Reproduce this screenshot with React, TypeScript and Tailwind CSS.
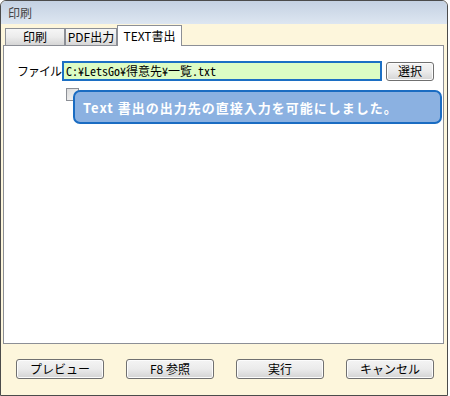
const ui = "font-['Noto_Sans_CJK_JP','Noto_Sans',sans-serif]";
const mono = "font-['Noto_Sans_Mono_CJK_JP','Noto_Sans_CJK_JP',monospace]";

function Tab({ label, width, active }: { label: string; width: string; active?: boolean }) {
  if (active) {
    return (
      <div
        className={`${width} relative -mb-px flex h-[21px] items-center justify-center border border-b-0 border-[#8c8f96] bg-white text-[12px] leading-none text-black`}
      >
        {label}
      </div>
    );
  }
  return (
    <div
      className={`${width} flex h-[17px] items-center justify-center border border-b-0 border-[#8c8f96] bg-gradient-to-b from-[#f6f6f6] via-[#ececec] to-[#d6d6d6] text-[12px] leading-none text-black`}
    >
      {label}
    </div>
  );
}

function Button({ label, className = "" }: { label: string; className?: string }) {
  return (
    <button
      className={`${className} flex items-center justify-center rounded-[3px] border border-[#707070] bg-gradient-to-b from-[#f4f4f4] via-[#ebebeb] to-[#d4d4d4] text-[12px] leading-none text-black shadow-[inset_0_0_0_1px_#fcfcfc]`}
    >
      {label}
    </button>
  );
}

export default function App() {
  return (
    <div className={`h-[396px] w-[450px] bg-white ${ui}`}>
      <div className="flex h-[396px] w-[448px] flex-col overflow-hidden rounded-t-[6px] border border-[#4b4b4b] bg-[#fdf6dc]">
        {/* title bar */}
        <div className="flex h-[23px] items-center bg-gradient-to-b from-[#c4d1e2] to-[#dde6f1] px-[7px] text-[12px] leading-none text-[#454545]">
          印刷
        </div>

        {/* tabs */}
        <div className="relative z-10 flex h-[21px] items-end pl-[4px]">
          <Tab label="印刷" width="w-[60px]" />
          <Tab label="PDF出力" width="w-[52px]" />
          <Tab label="TEXT書出" width="w-[65px]" active />
        </div>

        {/* panel */}
        <div className="relative ml-[2px] mr-[3px] h-[299px] border border-[#8c8f96] bg-white">
          <div className="mt-[15px] flex items-center">
            <span className="w-[58px] pr-[1px] text-right text-[12px] leading-none tracking-[-1px] text-black">
              ファイル
            </span>
            <div className="flex h-[20px] w-[320px] items-center border-2 border-[#1c6fc4] bg-[#dcfcc4] pl-[2px]">
              <span className={`${mono} text-[12px] leading-none text-black`}>C:¥LetsGo¥得意先¥一覧.txt</span>
            </div>
            <Button label="選択" className="ml-[4px] h-[19px] w-[48px]" />
          </div>

          {/* checkbox row, its label sits under the balloon */}
          <div className="mt-[7px] flex items-start pl-[62px]">
            <div className="h-[13px] w-[13px] border border-[#8c8f96] bg-gradient-to-br from-[#dcdcdc] to-[#f8f8f8]" />
          </div>

          {/* balloon tip */}
          <div className="absolute left-[69px] top-[44px] flex h-[34px] w-[369px] items-center rounded-[7px] border-2 border-[#1a6cc2] bg-[#8bb1e1] pl-[8px] text-[13px] font-bold leading-none tracking-[1px] text-white">
            Text 書出の出力先の直接入力を可能にしました。
          </div>
        </div>

        {/* bottom buttons */}
        <div className="flex gap-[22px] pl-[15px] pt-[15px]">
          <Button label="プレビュー" className="h-[20px] w-[88px]" />
          <Button label="F8 参照" className="h-[20px] w-[88px]" />
          <Button label="実行" className="h-[20px] w-[88px]" />
          <Button label="キャンセル" className="h-[20px] w-[88px]" />
        </div>
      </div>
    </div>
  );
}
